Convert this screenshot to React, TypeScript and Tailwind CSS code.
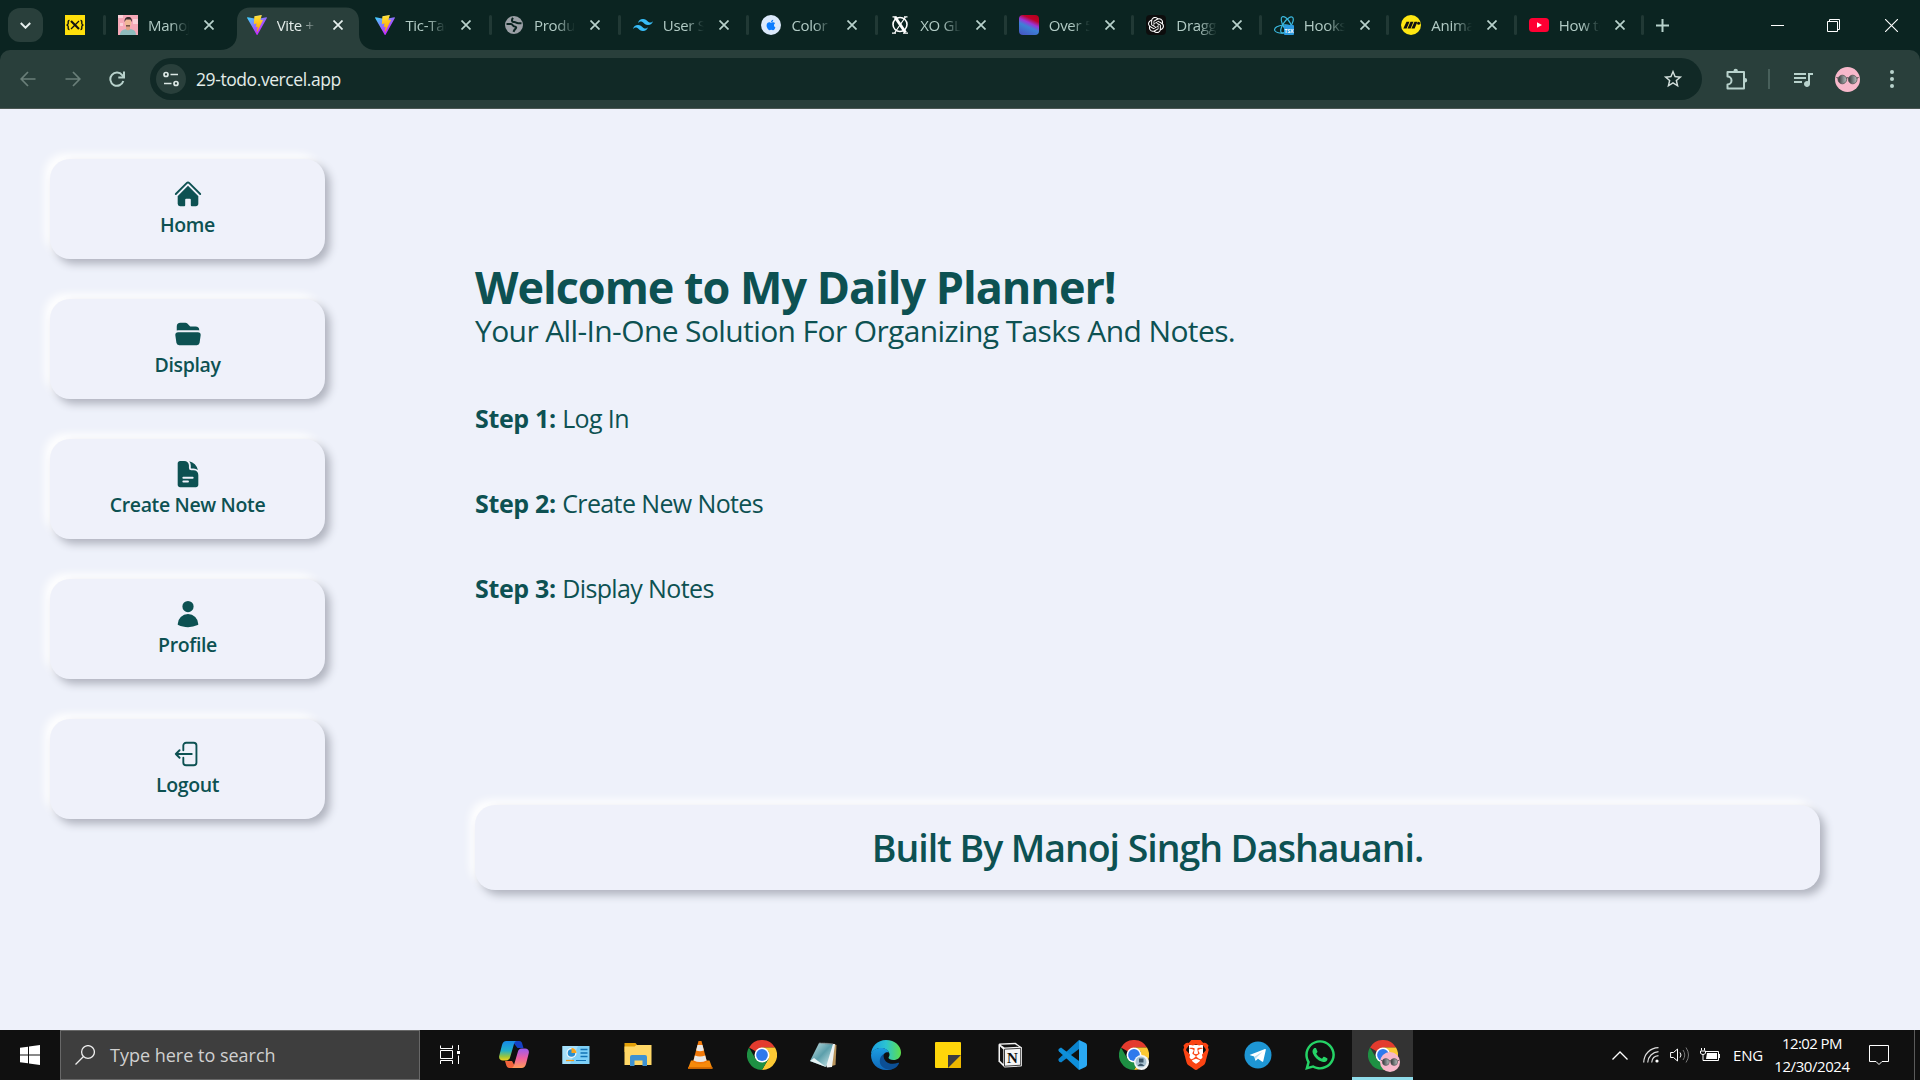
import React from "react";
import { SiOpenai, SiTailwindcss, SiBrave } from "react-icons/si";
import { FaApple, FaWhatsapp } from "react-icons/fa";
import { MdQueueMusic, MdStarBorder } from "react-icons/md";

/* ---------- favicons ---------- */

const ViteIcon = () => (
  <svg viewBox="0 0 256 257" className="h-5 w-5">
    <defs>
      <linearGradient id="va" x1="-.8%" x2="57.6%" y1="7.7%" y2="78.4%">
        <stop offset="0%" stopColor="#41D1FF" />
        <stop offset="100%" stopColor="#BD34FE" />
      </linearGradient>
      <linearGradient id="vb" x1="43.4%" x2="50.3%" y1="2.2%" y2="89%">
        <stop offset="0%" stopColor="#FFEA83" />
        <stop offset="8.3%" stopColor="#FFDD35" />
        <stop offset="100%" stopColor="#FFA800" />
      </linearGradient>
    </defs>
    <path fill="url(#va)" d="M255.153 37.938L134.897 252.976c-2.483 4.44-8.862 4.466-11.382.048L.875 37.958c-2.746-4.814 1.371-10.646 6.827-9.67l120.385 21.517a6.537 6.537 0 0 0 2.322-.004l117.867-21.483c5.438-.991 9.574 4.796 6.877 9.62Z" />
    <path fill="url(#vb)" d="M185.432.063L96.44 17.501a3.268 3.268 0 0 0-2.634 3.014l-5.474 92.456a3.268 3.268 0 0 0 3.997 3.378l24.777-5.718c2.318-.535 4.413 1.507 3.936 3.838l-7.361 36.047c-.495 2.426 1.782 4.5 4.151 3.78l15.304-4.649c2.372-.72 4.652 1.36 4.15 3.788l-11.698 56.621c-.732 3.542 3.979 5.473 5.943 2.437l1.313-2.028l72.516-144.72c1.215-2.423-.88-5.186-3.54-4.672l-25.505 4.922c-2.396.462-4.435-1.77-3.759-4.114l16.646-57.705c.677-2.35-1.37-4.583-3.769-4.113Z" />
  </svg>
);

const PortraitIcon = () => (
  <svg viewBox="0 0 20 20" className="h-5 w-5">
    <rect width="20" height="20" fill="#f6a9b8" />
    <path d="M0 0h5v3H0zM15 4h5v5h-5zM2 8h3v3H2z" fill="#fbd0d8" />
    <path d="M2 20c0-4 3-6 8-6s8 1.500 8 6z" fill="#8fbcbd" />
    <path d="M8 11h4v3.500l-2 1-2-1z" fill="#e2a184" />
    <ellipse cx="10" cy="8" rx="3.200" ry="4" fill="#f0b896" />
    <path d="M6.500 7c0-4 1.500-5 4-5s4 2 3 5l-1-2.500H8z" fill="#3a2a2b" />
    <path d="M8 10.200h4v1.300H8z" fill="#5a3a34" />
  </svg>
);

const GlobeIcon = () => (
  <svg viewBox="0 0 20 20" className="h-5 w-5">
    <circle cx="10" cy="10" r="9" fill="#9ba0a6" />
    <path d="M2.500 9h4.500c2 0 1.500 2.500 3.500 2.500s2 1.300 1 2.300-1.500 1.700-2 3M9 2.800c-1.500 2-1.500 4.500 1 4.200 2-.200 2.500 1.500 4.500 1.200h3" fill="none" stroke="#0b2421" strokeWidth="2" />
  </svg>
);

const XoIcon = () => (
  <svg viewBox="0 0 20 20" className="h-5 w-5" fill="none" stroke="#fff">
    <circle cx="10" cy="9.500" r="7" strokeWidth="1.600" />
    <path d="M5 2l10.500 15.500" strokeWidth="3" />
    <path d="M15.500 2L4.500 18M2.500 1.800h4M14 1.800h3.500M2 18.200h4M13 18.200h5" strokeWidth="1.200" />
  </svg>
);

const GradientIcon = () => (
  <div className="h-5 w-5 rounded bg-[linear-gradient(205deg,#b3001b_0%,#c00028_25%,#9a35d8_42%,#3b82d6_58%,#4750c0_100%)]" />
);

const ReactTsIcon = () => (
  <svg viewBox="0 0 20 20" className="h-5 w-5">
    <g fill="none" stroke="#3bb8de" strokeWidth="1.200">
      <ellipse cx="9.500" cy="14" rx="9" ry="4" transform="rotate(-6 9.500 14)" />
      <ellipse cx="13" cy="10" rx="9.500" ry="3.800" transform="rotate(60 13 10)" />
      <ellipse cx="13" cy="10" rx="9.500" ry="3.800" transform="rotate(125 13 10)" />
    </g>
    <rect x="10" y="10" width="10" height="10" rx="1" fill="#2c9be0" />
    <text x="10.600" y="17.600" fontSize="5" fontWeight="700" fill="#fff" fontFamily="Open Sans, sans-serif">TSX</text>
  </svg>
);

const MotionIcon = () => (
  <svg viewBox="0 0 20 20" className="h-5 w-5">
    <circle cx="10" cy="10" r="10" fill="#ffe712" />
    <path d="M5.500 6.800h3L5.600 13.500H2.300zM9.500 6.800h3l-2.900 6.700H6.500zM13.500 6.800h3l-2.900 6.700h-3.200z" fill="#111" />
    <circle cx="17.600" cy="8.300" r="1.500" fill="#111" />
  </svg>
);

const YoutubeIcon = () => (
  <svg viewBox="0 0 20 20" className="h-5 w-5">
    <rect y="3" width="20" height="14" rx="3.500" fill="#ff0033" />
    <path d="M8 7.200v5.600l5-2.800z" fill="#fff" />
  </svg>
);

type TabInfo = { label: string; icon: React.ReactNode; active?: boolean; sep?: boolean; narrow?: boolean };

const tabs: TabInfo[] = [
  { label: "Manoj", icon: <PortraitIcon />, sep: true },
  { label: "Vite + React", icon: <ViteIcon />, active: true },
  { label: "Tic-Tac", icon: <ViteIcon /> },
  { label: "Produc", icon: <GlobeIcon />, sep: true },
  { label: "User St", icon: <SiTailwindcss className="h-5 w-5 text-[#38bdf8]" />, sep: true },
  {
    label: "Color P",
    icon: (
      <span className="flex h-5 w-5 items-center justify-center rounded-full bg-[#dbe9fb]">
        <FaApple className="h-3 w-3 text-[#0a7cff]" />
      </span>
    ),
    sep: true,
  },
  { label: "XO GLO", icon: <XoIcon />, sep: true },
  { label: "Over 50", icon: <GradientIcon />, sep: true, narrow: true },
  {
    label: "Dragga",
    icon: (
      <span className="flex h-5 w-5 items-center justify-center rounded bg-[#0d0d0d]">
        <SiOpenai className="h-4 w-4 text-white" />
      </span>
    ),
    sep: true,
    narrow: true,
  },
  { label: "Hooks", icon: <ReactTsIcon />, sep: true, narrow: true },
  { label: "Animat", icon: <MotionIcon />, sep: true, narrow: true },
  { label: "How to", icon: <YoutubeIcon />, sep: true, narrow: true },
];

const Close = ({ className }: { className: string }) => (
  <svg viewBox="0 0 10 10" className={className} fill="none" stroke="currentColor" strokeWidth="1.700">
    <path d="M.500.500l9 9M9.500.500l-9 9" />
  </svg>
);

function Tab({ label, icon, active, sep, narrow }: TabInfo) {
  return (
    <div className={`relative flex h-[50px] shrink-0 items-center pl-[13px] ${narrow ? "w-[127.500px]" : "w-[128.700px]"}`}>
      {sep && <span className="absolute -left-[2px] top-[15px] h-5 w-[3px] rounded bg-[#213935]" />}
      {active && (
        <svg className="absolute -left-[14px] top-[7px] h-[43px] w-[156px]" viewBox="0 0 156 43">
          <path d="M0 43C10 43 17 37 17 27V14C17 6 22 .500 30 .500H126C134 .500 139 6 139 14V27C139 37 146 43 156 43Z" fill="#293f3b" />
        </svg>
      )}
      <span className="relative shrink-0">{icon}</span>
      <span
        className={`relative ml-[10px] w-[41px] shrink-0 overflow-hidden whitespace-nowrap text-[15px] leading-5 tracking-[-0.300px] [mask-image:linear-gradient(to_right,black_55%,transparent)] ${active ? "text-[#e3ece9]" : "text-[#b2cbc5]"}`}
      >
        {label}
      </span>
      <Close className={`relative ml-[15px] h-[10px] w-[10px] shrink-0 ${active ? "text-[#e6f0ee]" : "text-[#b8d2cc]"}`} />
    </div>
  );
}

function TabStrip() {
  return (
    <div className="flex h-[50px] bg-[#0b2421] text-[#b8d2cc]">
      <div className="flex w-[105px] shrink-0 items-center pl-2">
        <span className="flex h-[34px] w-[35px] items-center justify-center rounded-xl bg-[#293f3b]">
          <svg viewBox="0 0 10 6" className="h-[7px] w-[11px]" fill="none" stroke="#e6f0ee" strokeWidth="1.800">
            <path d="M.700.700L5 5l4.300-4.300" />
          </svg>
        </span>
        <svg viewBox="0 0 20 20" className="ml-[22px] h-5 w-5">
          <rect width="20" height="20" fill="#ffdf0b" />
          <g fill="none" stroke="#111">
            <path d="M4.500 5.500c-2 0-1 2-1.400 3.400-.200.700-.800 1.100-1.600 1.100.800 0 1.400.400 1.600 1.100.400 1.400-.600 3.400 1.400 3.400M15.500 5.500c2 0 1 2 1.400 3.400.200.700.800 1.100 1.600 1.100-.800 0-1.400.400-1.600 1.100-.400 1.400.600 3.400-1.400 3.400" strokeWidth="1.400" />
            <path d="M6 6l8 8" strokeWidth="2.200" />
            <path d="M14 6l-8 8" strokeWidth="1.300" />
          </g>
        </svg>
      </div>
      {tabs.map((t) => (
        <Tab key={t.label} {...t} />
      ))}
      <div className="relative flex grow items-center pl-[13px]">
        <span className="absolute -left-[2px] top-[15px] h-5 w-[3px] rounded bg-[#213935]" />
        <svg viewBox="0 0 13 13" className="h-[13px] w-[13px]" stroke="currentColor" strokeWidth="2">
          <path d="M6.500 0v13M0 6.500h13" />
        </svg>
      </div>
      <div className="flex items-center pr-[22px] text-white">
        <svg viewBox="0 0 13 13" className="h-[13px] w-[13px]" stroke="currentColor">
          <path d="M0 6.500h13" />
        </svg>
        <svg viewBox="0 0 13 13" className="ml-[43px] h-[13px] w-[13px]" fill="none" stroke="currentColor">
          <path d="M.500 2.500h10v10H.500zM2.500 2.500V.500h10v10h-2" />
        </svg>
        <svg viewBox="0 0 13 13" className="ml-[45px] h-[13px] w-[13px]" stroke="currentColor" strokeWidth="1.100">
          <path d="M0 0l13 13M13 0L0 13" />
        </svg>
      </div>
    </div>
  );
}

const Glasses = ({ className }: { className: string }) => (
  <svg viewBox="0 0 25 25" className={className}>
    <defs>
      <linearGradient id="lens" x1="0" x2="1">
        <stop offset="0" stopColor="#2f3436" />
        <stop offset="1" stopColor="#b9bfc0" />
      </linearGradient>
    </defs>
    <circle cx="12.500" cy="12.500" r="12.500" fill="#f7b8cb" />
    <path d="M1.500 10.500l2 .800M23.500 10.500l-2 .800M10.500 11.500q2-1.500 4 0" stroke="#333" fill="none" />
    <circle cx="7.300" cy="12.500" r="4.300" fill="url(#lens)" stroke="#555" strokeWidth=".800" />
    <circle cx="17.700" cy="12.500" r="4.300" fill="url(#lens)" stroke="#555" strokeWidth=".800" />
  </svg>
);

function Toolbar() {
  return (
    <div className="bg-[#0b2421]">
      <div className="flex h-[59px] items-center rounded-t-[10px] border-b border-[#4b5753] bg-[#293f3b] pl-5 text-[#b8d2cc]">
        <svg viewBox="0 0 16 16" className="h-4 w-4 text-[#6a7f79]" fill="none" stroke="currentColor" strokeWidth="1.700">
          <path d="M15.500 8H1.500M8 1L1.200 8 8 15" />
        </svg>
        <svg viewBox="0 0 16 16" className="ml-[29px] h-4 w-4 text-[#6a7f79]" fill="none" stroke="currentColor" strokeWidth="1.700">
          <path d="M.500 8h14M8 1l6.800 7L8 15" />
        </svg>
        <svg viewBox="0 0 16 16" className="ml-[28px] h-4 w-4" fill="none" stroke="currentColor" strokeWidth="2">
          <path d="M14.300 10A6.600 6.600 0 1 1 13.200 4.200L15 6.500M15 .500v6H9.300" />
        </svg>
        <div className="ml-[25px] flex h-[42px] w-[1552px] items-center rounded-full bg-[#112926] pl-[6px] pr-[18px]">
          <span className="flex h-[30px] w-[30px] items-center justify-center rounded-full bg-[#293f3b]">
            <svg viewBox="0 0 16 16" className="h-4 w-4" fill="none" stroke="#dbe7e4" strokeWidth="1.700">
              <circle cx="3" cy="3.500" r="2" />
              <path d="M7.500 3.500H15M1 12.500h7.500" />
              <circle cx="13" cy="12.500" r="2" />
            </svg>
          </span>
          <span className="ml-[10px] text-[17.500px] leading-6 tracking-[-0.420px] text-[#e3ece9]">
            29-todo.vercel.app
          </span>
          <MdStarBorder className="ml-auto h-[22px] w-[22px] text-[#d3dfdc]" />
        </div>
        <svg viewBox="0 0 22 22" className="ml-[24px] h-[22px] w-[22px]" fill="none" stroke="currentColor" strokeWidth="2">
          <path d="M2 4H18V20.500H1.500V16.500a3.600 3.600 0 0 0 0-8V4z" strokeLinejoin="round" />
          <path d="M7.500 3a2.200 2.200 0 0 1 4.400 0zM19 10a2.200 2.200 0 0 1 0 4.400z" fill="currentColor" stroke="none" />
        </svg>
        <span className="ml-[20px] h-5 w-[2px] bg-[#48605b]" />
        <MdQueueMusic className="ml-[21px] h-[24px] w-[24px]" />
        <Glasses className="ml-[20px] h-[25px] w-[25px]" />
        <svg viewBox="0 0 4 18" className="ml-[30px] h-[18px] w-1" fill="currentColor">
          <circle cx="2" cy="2" r="2" />
          <circle cx="2" cy="9" r="2" />
          <circle cx="2" cy="16" r="2" />
        </svg>
      </div>
    </div>
  );
}

/* ---------- page ---------- */

const solid = (d: string[]) => (
  <svg viewBox="0 0 24 24" className="h-[30px] w-[30px]" fill="currentColor">
    {d.map((p) => (
      <path key={p} fillRule="evenodd" d={p} />
    ))}
  </svg>
);

const menu = [
  {
    label: "Home",
    icon: solid([
      "M11.470 3.841a.75.75 0 0 1 1.060 0l8.690 8.690a.75.75 0 1 0 1.060-1.061l-8.689-8.690a2.250 2.250 0 0 0-3.182 0l-8.690 8.690a.75.75 0 1 0 1.061 1.060l8.690-8.689Z",
      "m12 5.432 8.159 8.159c.03.03.06.058.091.086v6.198c0 1.035-.84 1.875-1.875 1.875H15a.75.75 0 0 1-.75-.75v-4.500a.75.75 0 0 0-.75-.75h-3a.75.75 0 0 0-.75.75V21a.75.75 0 0 1-.75.75H5.625a1.875 1.875 0 0 1-1.875-1.875v-6.198a2.290 2.290 0 0 0 .091-.086L12 5.432Z",
    ]),
  },
  {
    label: "Display",
    icon: solid([
      "M19.906 9c.382 0 .749.057 1.094.162V9a3 3 0 0 0-3-3h-3.879a.75.75 0 0 1-.53-.22L11.470 3.660A2.250 2.250 0 0 0 9.879 3H6a3 3 0 0 0-3 3v3.162A3.756 3.756 0 0 1 4.094 9h15.812ZM4.094 10.500a2.250 2.250 0 0 0-2.227 2.568l.857 6A2.250 2.250 0 0 0 4.951 21H19.050a2.250 2.250 0 0 0 2.227-1.932l.857-6a2.250 2.250 0 0 0-2.227-2.568H4.094Z",
    ]),
  },
  {
    label: "Create New Note",
    icon: solid([
      "M5.625 1.500c-1.036 0-1.875.84-1.875 1.875v17.250c0 1.035.84 1.875 1.875 1.875h12.750c1.035 0 1.875-.84 1.875-1.875V12.750A3.750 3.750 0 0 0 16.500 9h-1.875a1.875 1.875 0 0 1-1.875-1.875V5.250A3.750 3.750 0 0 0 9 1.500H5.625ZM7.500 15a.75.75 0 0 1 .75-.75h7.500a.75.75 0 0 1 0 1.500h-7.500A.75.75 0 0 1 7.500 15Zm.75 2.250a.75.75 0 0 0 0 1.500H12a.75.75 0 0 0 0-1.500H8.250Z",
      "M12.971 1.816A5.230 5.230 0 0 1 14.250 5.250v1.875c0 .207.168.375.375.375H16.500a5.230 5.230 0 0 1 3.434 1.279 9.768 9.768 0 0 0-6.963-6.963Z",
    ]),
  },
  {
    label: "Profile",
    icon: solid([
      "M7.500 6a4.500 4.500 0 1 1 9 0 4.500 4.500 0 0 1-9 0ZM3.751 20.105a8.250 8.250 0 0 1 16.498 0 .75.75 0 0 1-.437.695A18.683 18.683 0 0 1 12 22.500c-2.786 0-5.433-.608-7.812-1.700a.75.75 0 0 1-.437-.695Z",
    ]),
  },
  {
    label: "Logout",
    icon: (
      <svg viewBox="0 0 24 24" className="h-[30px] w-[30px]" fill="none" stroke="currentColor" strokeWidth="1.500" strokeLinecap="round" strokeLinejoin="round">
        <path d="M8.250 9V5.250A2.250 2.250 0 0 1 10.500 3h6a2.250 2.250 0 0 1 2.250 2.250v13.500A2.250 2.250 0 0 1 16.500 21h-6a2.250 2.250 0 0 1-2.250-2.250V15m-3 0-3-3m0 0 3-3m-3 3H15" />
      </svg>
    ),
  },
];

const steps = [
  ["Step 1:", "Log In"],
  ["Step 2:", "Create New Notes"],
  ["Step 3:", "Display Notes"],
];

function Page() {
  return (
    <main className="flex h-[921px] bg-[#eef1fa] text-[#0d5152]">
      <nav className="flex w-[325px] shrink-0 flex-col gap-10 pl-[50px] pt-[50px]">
        {menu.map((m) => (
          <div key={m.label} className="flex h-[100px] flex-col items-center rounded-[20px] bg-[#eff1fa] pt-5 shadow-[5px_5px_8px_#b1b4bf,-5px_-5px_8px_#ffffff]">
            {m.icon}
            <span className="mt-px text-[19.500px] font-semibold leading-[30px] tracking-[-0.360px]">{m.label}</span>
          </div>
        ))}
      </nav>
      <section className="ml-[150px] flex w-[1345px] flex-col items-start">
        <h1 className="mt-[148px] whitespace-nowrap text-[45px] font-bold leading-[60px] tracking-[-1.030px]">Welcome to My Daily Planner!</h1>
        <p className="-mt-[4px] whitespace-nowrap text-[30px] leading-[36px] tracking-[-0.610px]">Your All-In-One Solution For Organizing Tasks And Notes.</p>
        <div className="mt-[51px] flex flex-col gap-[49px]">
          {steps.map(([a, b]) => (
            <p key={a} className="text-[25px] leading-9">
              <b className="font-bold tracking-[-0.350px]">{a}</b> <span className="tracking-[-0.620px]">{b}</span>
            </p>
          ))}
        </div>
        <footer className="mt-[199px] flex h-[85px] w-full items-center justify-center rounded-[20px] bg-[#eff1fa] shadow-[5px_5px_8px_#b1b4bf,-5px_-5px_8px_#ffffff]">
          <span className="text-[37.500px] font-semibold leading-[50px] tracking-[-1.060px]">Built By Manoj Singh Dashauani.</span>
        </footer>
      </section>
    </main>
  );
}

/* ---------- taskbar ---------- */

const Chrome = () => (
  <>
    <path d="M15 15L2 7.500A15 15 0 0 1 28 7.500H15z" fill="#e33b2e" />
    <path d="M28 7.500A15 15 0 0 1 15 30L21.500 18.750 21.500 11.250 15 7.500z" fill="#fcc934" />
    <path d="M2 7.500A15 15 0 0 0 15 30L21.500 18.750 15 22.500 8.500 18.750z" fill="#1e9043" />
    <circle cx="15" cy="15" r="7.500" fill="#fff" />
    <circle cx="15" cy="15" r="5.900" fill="#2f79ec" />
  </>
);

const S = ({ children }: { children: React.ReactNode }) => (
  <svg viewBox="0 0 30 30" className="h-[30px] w-[30px]">{children}</svg>
);

const apps: { name: string; icon: React.ReactNode; active?: boolean }[] = [
  {
    name: "copilot",
    icon: (
      <S>
        <defs>
          <linearGradient id="c1" x1="0" x2="0" y1="0" y2="1"><stop offset="0" stopColor="#1688e8" /><stop offset=".5" stopColor="#22b0c8" /><stop offset=".8" stopColor="#9bc53d" /><stop offset="1" stopColor="#f3d21b" /></linearGradient>
          <linearGradient id="c2" x1="0" x2="0" y1="0" y2="1"><stop offset="0" stopColor="#9a5bf0" /><stop offset=".5" stopColor="#ee5fa0" /><stop offset="1" stopColor="#ff9c58" /></linearGradient>
        </defs>
        <path d="M13 1h7c2.500 0 3 1.500 3.600 4l.9 3h-6z" fill="#1541c4" />
        <path d="M17 28h-6.500c-2 0-3-1.500-3.600-4l-.9-3h7z" fill="#f2643c" />
        <path d="M7.500 1H18c-2 0-2.700 1.500-3.300 4l-3.500 12c-.6 2-1.600 3.500-4 3.500H4c-3 0-4.500-2-3.700-5L3 5c.8-2.600 2-4 4.500-4z" fill="url(#c1)" />
        <path d="M22.500 28H12c2 0 2.700-1.500 3.300-4l3.500-12c.6-2 1.600-3.500 4-3.500H26c3 0 4.500 2 3.700 5L27 24c-.8 2.600-2 4-4.500 4z" fill="url(#c2)" />
      </S>
    ),
  },
  {
    name: "control-panel",
    icon: (
      <S>
        <rect x="1.500" y="6" width="27" height="18" fill="#7fd0f7" />
        <path d="M1.500 6H17L9 24H1.500z" fill="#a5e0fb" />
        <circle cx="10.500" cy="13" r="5" fill="#f3f8fb" />
        <circle cx="10.500" cy="13" r="3.800" fill="#2a8fd0" />
        <path d="M10.500 13V8a5 5 0 0 1 5 5z" fill="#f7a51c" />
        <path d="M19.500 9.500h7M19.500 13h7M19.500 16.500h7" stroke="#1373b5" strokeWidth="1.300" />
        <path d="M5 20.500h8" stroke="#f39a1a" strokeWidth="1.300" />
        <path d="M15 20.500h10" stroke="#1373b5" />
      </S>
    ),
  },
  {
    name: "explorer",
    icon: (
      <S>
        <path d="M1.500 3h11l2 2.500V12h-13z" fill="#e3a008" />
        <path d="M1.500 6.500h10l2-1.500h15v20h-27z" fill="#ffd766" />
        <path d="M7 26V17q0-2 2-2h13q2 0 2 2v9h-4.500v-5.500h-8V26z" fill="#3e92d2" />
      </S>
    ),
  },
  {
    name: "vlc",
    icon: (
      <S>
        <path d="M6 20.500h18.500l3 8H3z" fill="#f58a0b" />
        <path d="M3 27h24.500v1.800H3z" fill="#d96c00" />
        <path d="M13.500 1h3L22 22q-7 4-14 0z" fill="#f27a0a" />
        <path d="M12.500 5h5l1.400 5.500q-4 1.300-7.800 0zM9.900 15.500q5 2 10.300 0l1.400 5q-6.500 3-13 0z" fill="#e8e8e8" />
      </S>
    ),
  },
  { name: "chrome", icon: <S><Chrome /></S> },
  {
    name: "notepad",
    icon: (
      <S>
        <defs><linearGradient id="np" x1="0" x2="1" y1="0" y2="1"><stop offset="0" stopColor="#c8e2e4" /><stop offset=".5" stopColor="#5c9fab" /><stop offset="1" stopColor="#d8eef0" /></linearGradient></defs>
        <path d="M25 4l2.500 1-1 20-4 1z" fill="#b8935a" />
        <path d="M10 3l16 1-3 23-5 .5z" fill="#eef3f3" />
        <path d="M10 3l14 1-7 23L1 21z" fill="url(#np)" />
        <path d="M1 21l4-3 12 9z" fill="#e6f3f4" />
        <path d="M10.500 3l13.500 1" stroke="#777" strokeWidth="1.500" strokeDasharray="1 1" />
      </S>
    ),
  },
  {
    name: "edge",
    icon: (
      <S>
        <defs>
          <linearGradient id="e1" x1="0" x2="1"><stop offset="0" stopColor="#1b9de2" /><stop offset=".5" stopColor="#2bc3d2" /><stop offset="1" stopColor="#5ee04a" /></linearGradient>
          <linearGradient id="e2" x1="0" x2="0" y1="0" y2="1"><stop offset="0" stopColor="#1b9de2" /><stop offset="1" stopColor="#1067b8" /></linearGradient>
        </defs>
        <path d="M0 15C0 6.500 6.500 0 15 0c9 0 15 6 15 12.500 0 5-3.500 7.500-7.500 7.500-3 0-5-1-5-2.200 0-.8 1-1.300 1-3.300C18.500 11 14.500 8 10 8 5 8 1 11 0 15z" fill="url(#e1)" />
        <path d="M0 15C1 10.500 5 8 10 8c4 0 7 2 8 4.500-2-.8-6.500 0-6.500 6.500 0 6 5 10 10 10-2 .8-4 1-6.500 1C6.500 30 0 23.500 0 15z" fill="url(#e2)" />
        <path d="M12.500 14c-4 3-5 8-2 12 3 3.500 8 4 11.500 3 3-1 5-3.500 6-5.500.3-.7-.3-1-1-.7C20 25.500 12 23 12.500 14z" fill="#0c4f95" />
      </S>
    ),
  },
  {
    name: "sticky-notes",
    icon: (
      <S>
        <rect x="2" y="2" width="26" height="26" rx="1" fill="#ffd60a" />
        <path d="M28 15v12q0 1-1 1H15z" fill="#eeb700" />
        <path d="M15 15h13L15 28z" fill="#3b3b40" />
      </S>
    ),
  },
  {
    name: "notion",
    icon: (
      <S>
        <path d="M4.500 3.500L20.500 2.800 27 7.500V25q0 1.500-1.500 1.600L9.500 27.500 3.500 21.500V5q0-1.300 1-1.500z" fill="#f5f5f5" />
        <path d="M5.500 4.800L20 4.200l4 2.600-14.500.8z" fill="#111" />
        <path d="M5 6.500l3.300 3v14.500L5 20.800z" fill="#111" />
        <path d="M9.500 9.200L25.700 8.300V25.200L9.500 26.200z" fill="#f5f5f5" stroke="#111" strokeWidth=".800" />
        <text x="12" y="22.500" fontSize="15" fontWeight="700" fill="#111" fontFamily="Liberation Serif, serif">N</text>
      </S>
    ),
  },
  {
    name: "vscode",
    icon: (
      <S>
        <path d="M22 0L2 18.500q-1.500 1.500 0 2.700L4 22.500 22 9z" fill="#0a84cf" />
        <path d="M22 30L2 11.500Q.5 10 2 8.800L4 7.500 22 21z" fill="#0e8fdb" />
        <path d="M22 0l6.500 3q1.500.8 1.500 2.500v19q0 1.700-1.500 2.500L22 30z" fill="#2aa9f4" />
      </S>
    ),
  },
  {
    name: "chrome-profile",
    icon: (
      <S>
        <Chrome />
        <circle cx="22.500" cy="22.500" r="7.500" fill="#f4f6f7" />
        <circle cx="22" cy="22" r="5.500" fill="#a9c3d2" />
        <path d="M18.500 26q3-5 7 0zM20 18.500h4.500v4H20z" fill="#3d566a" />
      </S>
    ),
  },
  {
    name: "brave",
    icon: (
      <span className="relative flex h-[30px] w-[30px] items-center justify-center">
        <span className="absolute h-[20px] w-[14px] bg-white" />
        <SiBrave className="relative h-[30px] w-[30px] text-[#fb4413]" />
      </span>
    ),
  },
  {
    name: "telegram",
    icon: (
      <S>
        <circle cx="15" cy="15" r="13.500" fill="#1e96d4" />
        <path d="M6.500 15L22 9q1-.3.800 1l-2.500 11q-.3 1.300-1.400.6l-3.900-2.900-2 1.900q-.6.500-.8-.5l-1-3.700-4-1.200q-1-.4-.2-.2z" fill="#fff" />
        <path d="M11.800 16.500l7.500-4.700-6 6-.3 2.300z" fill="#b8dcf0" />
      </S>
    ),
  },
  { name: "whatsapp", icon: <FaWhatsapp className="h-[34px] w-[34px] text-[#25d366]" /> },
  {
    name: "chrome-active",
    icon: (
      <span className="relative h-[30px] w-[30px]">
        <S><Chrome /></S>
        <Glasses className="absolute left-[12px] top-[12px] h-5 w-5" />
      </span>
    ),
    active: true,
  },
];

function Taskbar() {
  return (
    <div className="flex h-[50px] bg-[#101010] text-white">
      <div className="flex w-[60px] shrink-0 items-center justify-center">
        <svg viewBox="0 0 20 20" className="h-5 w-5" fill="#fff">
          <path d="M0 2.800L8 1.700V9.500H0zM9 1.500L20 0v9.500H9zM0 10.500h8v7.800L0 17.200zM9 10.500h11V20L9 18.500z" />
        </svg>
      </div>
      <div className="flex w-[360px] shrink-0 items-center border border-[#686868] bg-[#3e3e3e] pl-[14px]">
        <svg viewBox="0 0 20 20" className="h-5 w-5" fill="none" stroke="#eee" strokeWidth="1.300">
          <circle cx="13" cy="7" r="6.400" />
          <path d="M8.500 11.500L.500 19.500" />
        </svg>
        <span className="ml-[15px] text-[18px] leading-6 text-[#d0d0d0]">Type here to search</span>
      </div>
      <div className="flex w-[63px] shrink-0 items-center pl-5">
        <svg viewBox="0 0 20 20" className="h-5 w-5" fill="none" stroke="#fff">
          <path d="M.500.500v3h12v-3M.500 5.500h12v8H.500zM.500 19v-3.500h12V19M18.500 0v5M18.500 10.500V19" />
          <path d="M17 6h3v3h-3z" fill="#fff" stroke="none" />
        </svg>
      </div>
      {apps.map((a) => (
        <div
          key={a.name}
          className={`flex shrink-0 items-center justify-center ${a.active ? "ml-px w-[61px] border-b-[3px] border-[#8fdcea] bg-[#333333] pt-[3px]" : "w-[62px]"}`}
        >
          {a.icon}
        </div>
      ))}
      <div className="ml-auto flex items-center">
        <svg viewBox="0 0 16 9" className="h-[9px] w-4" fill="none" stroke="#fff" strokeWidth="1.300">
          <path d="M.500 8.500L8 1l7.500 7.500" />
        </svg>
        <svg viewBox="0 0 16 16" className="ml-[15px] h-4 w-4" fill="none" stroke="#ddd" strokeWidth="1.200">
          <path d="M.700 15.500C1 7 7 1 15.500.700M4.700 15.500c.300-6 4.800-10.500 10.800-10.800M8.700 15.500c.300-3.800 3-6.500 6.800-6.800" />
          <circle cx="14" cy="14" r="1.600" fill="#fff" stroke="none" />
        </svg>
        <svg viewBox="0 0 20 18" className="ml-[11px] h-[18px] w-5" fill="none" stroke="#fff">
          <path d="M.600 6.500h2.900L7.500 3v12l-4-3.500H.600z" />
          <path d="M10 6.500q2 2.500 0 5" />
          <path d="M13 4q3.500 5 0 10M16 1.500q5 7.500 0 15" stroke="#777" />
        </svg>
        <svg viewBox="0 0 20 14" className="ml-[10px] h-[14px] w-5">
          <path d="M5.500 3.500h13v9h-13" fill="none" stroke="#fff" />
          <path d="M7 5h10v6H6z" fill="#fff" />
          <path d="M19 6h1v4h-1z" fill="#fff" />
          <path d="M1.500 0v2.500M4.500 0v2.500M.500 3h5v2Q5 6.500 3 6.500T.500 5zM3 6.500v6h3" fill="none" stroke="#fff" />
        </svg>
        <span className="ml-[13px] text-[15px] leading-5 tracking-[-0.200px]">ENG</span>
        <div className="ml-[11px] flex w-[76px] flex-col items-center text-[15px] leading-[23px]">
          <span className="whitespace-nowrap tracking-[-0.600px]">12:02 PM</span>
          <span className="whitespace-nowrap tracking-[-0.430px]">12/30/2024</span>
        </div>
        <svg viewBox="0 0 20 20" className="ml-[19px] h-5 w-5" fill="none" stroke="#fff">
          <path d="M.500.500h19v16H13l-3 3-3-3H.500z" />
        </svg>
        <span className="ml-[25px] mr-[5px] h-[50px] w-px bg-[#5a5a5a]" />
      </div>
    </div>
  );
}

export default function App() {
  return (
    <div className="flex h-[1080px] w-[1920px] flex-col overflow-hidden font-['Open_Sans','Noto_Sans',sans-serif]">
      <TabStrip />
      <Toolbar />
      <Page />
      <Taskbar />
    </div>
  );
}
